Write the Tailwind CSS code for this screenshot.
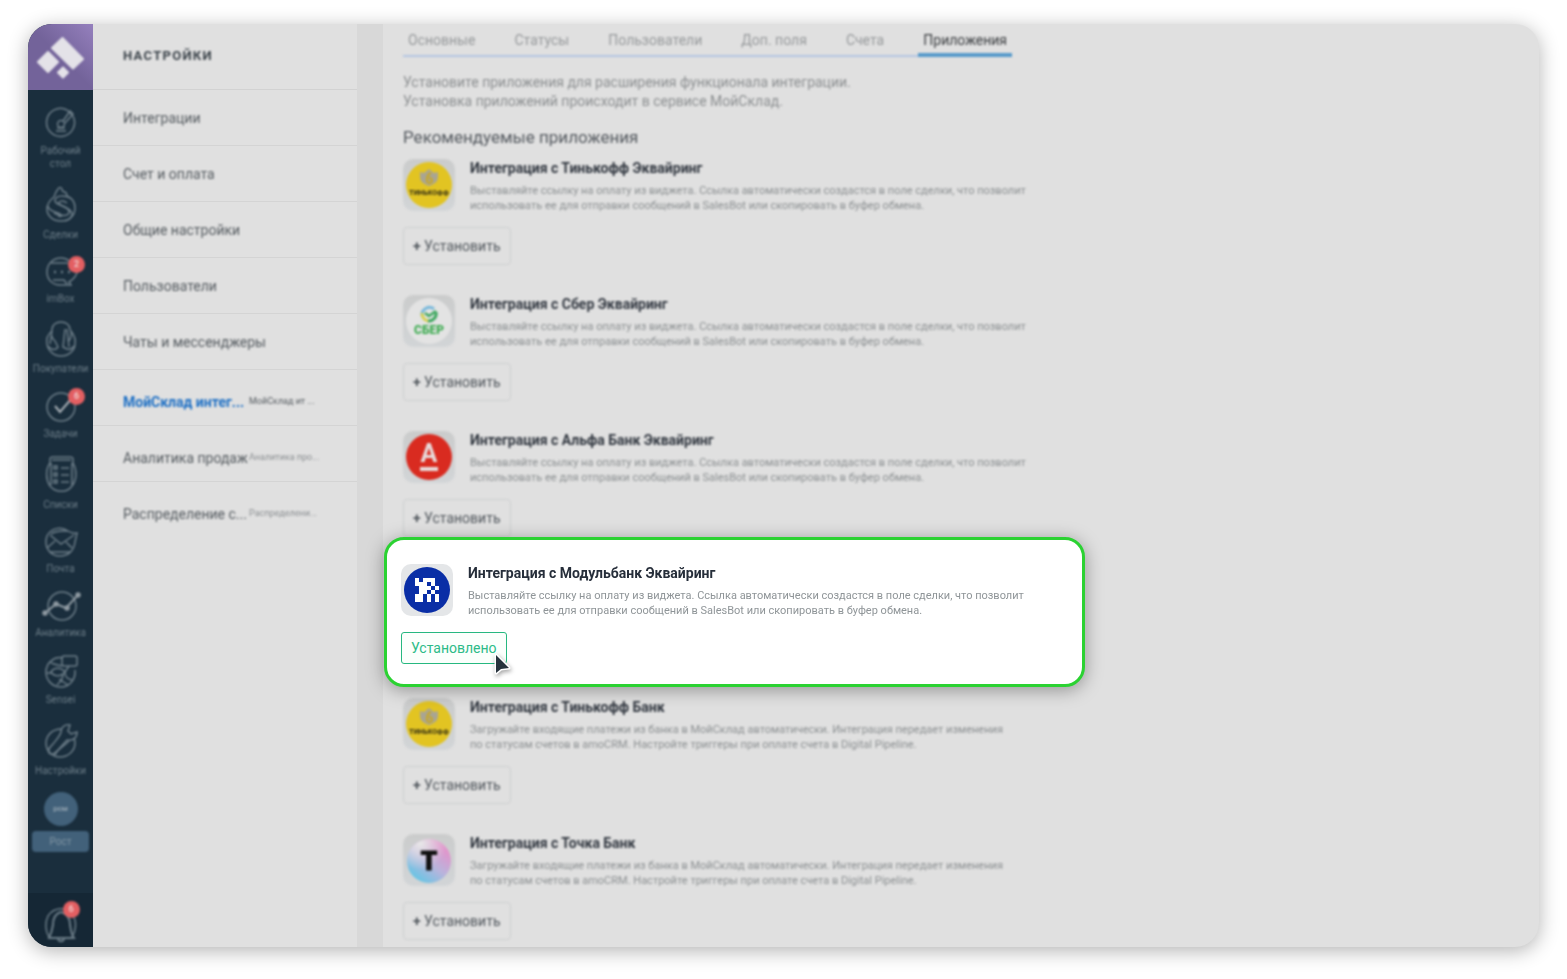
<!DOCTYPE html>
<html lang="ru">

<head>
  <meta charset="UTF-8" />
  <meta name="viewport" content="width=device-width, initial-scale=1" />
  <title>Настройки — Приложения</title>
  <script src="https://cdn.jsdelivr.net/npm/@tailwindcss/browser@4"></script>
</head>

<body class="h-screen bg-white px-7 pt-6 pb-8 font-['Roboto','Noto_Sans',sans-serif] text-[#3a4249]">

  <!-- Общие логотипы -->
  <svg class="absolute h-0 w-0" aria-hidden="true">
    <defs>
      <linearGradient id="tile" x1="0" y1="0" x2="0" y2="1">
        <stop offset="0" stop-color="#cbcccc" />
        <stop offset="1" stop-color="#d2d5d7" />
      </linearGradient>
      <linearGradient id="tochka" x1="0.25" y1="0.9" x2="0.8" y2="0.2">
        <stop offset="0" stop-color="#6ec4e4" />
        <stop offset="0.5" stop-color="#b9b4dc" />
        <stop offset="1" stop-color="#e096cc" />
      </linearGradient>
      <radialGradient id="tochkaLight" cx="0.3" cy="0.1" r="0.6">
        <stop offset="0" stop-color="#e8e8e8" />
        <stop offset="1" stop-color="#e8e8e8" stop-opacity="0" />
      </radialGradient>
    </defs>
    <symbol id="tinkoff" viewBox="0 0 52 52">
      <rect width="52" height="52" rx="10" fill="url(#tile)" />
      <circle cx="26" cy="26" r="23" fill="#e2c422" />
      <path d="M17 13l4 1 5-4 5 4 4-1v5c0 5-4 7-9 9-5-2-9-4-9-9z" fill="#a9a592" />
      <path d="M28 14c-3 1-4 4-4 7a2.500 2.500 0 1 0 2-2" fill="none" stroke="#c9a822" stroke-width="2" />
      <text x="26" y="36" text-anchor="middle" font-size="7" font-weight="800" fill="#3c3616">ТИНЬКОФФ</text>
    </symbol>
  </svg>

  <div class="flex h-full overflow-hidden rounded-3xl bg-[#e0e0e0] shadow-[0_4px_20px_rgba(0,0,0,0.3)]">

    <!-- Главное меню -->
    <nav class="flex w-[65px] shrink-0 flex-col bg-[#1a2e3d] text-[#6c7d88]">
      <a href="#" aria-label="Главная" class="block h-[66px] shrink-0 bg-linear-to-tr from-[#73639a] from-50% to-[#9580bd]">
        <svg viewBox="0 0 65 66" class="h-full w-full blur-[1px]" fill="#e4e2e8" stroke="#e4e2e8" stroke-width="2" stroke-linejoin="round">
          <path d="M34.500 14L55 35 45 44.500 24 24z" />
          <path d="M20 28l10 10-10 10-10-10z" />
          <path d="M35 43.500l5 5-5 5-5-5z" />
        </svg>
      </a>

      <ul class="flex flex-col gap-4 pt-[17px] text-center text-[10px] leading-[13px] blur-[1px]">
        <li>
          <a href="#" class="flex flex-col items-center gap-[5px]">
            <svg class="h-8 w-9" viewBox="0 0 36 32" fill="none" stroke="currentColor" stroke-width="1.500">
              <path d="M24 3a14 14 0 1 0 6 6" />
              <circle cx="18" cy="17" r="3.500" />
              <path d="M20 14l7-10 3 3-8 9M24 3l6 6M13 24h10M14 21h8" />
            </svg>
            <span>Рабочий<br />стол</span>
          </a>
        </li>
        <li>
          <a href="#" class="flex flex-col items-center gap-[5px]">
            <svg class="h-[37px] w-9" viewBox="0 0 36 37" fill="none" stroke="currentColor" stroke-width="1.500">
              <path d="M11 11l2-5c1-2 2-2 2-3 1-2 3-2 4 0 0 2 1 3 3 3 2 1 2 2 2 4 5 2 8 6 8 12 0 8-6 13-14 13S4 30 4 23c0-6 3-9 7-12" />
              <path d="M29 13c-6-4-16-4-17 1-1 6 14 5 14 12 0 4-8 5-15 1" />
              <path d="M24 17c-4-3-8-2-8 0 1 4 14 5 13 12-1 3-3 5-7 6M5 20c0 5 8 6 12 8 3 2 1 3-2 2" />
            </svg>
            <span>Сделки</span>
          </a>
        </li>
        <li>
          <a href="#" class="relative flex flex-col items-center gap-[5px]">
            <svg class="h-[30px] w-9" viewBox="0 0 36 30" fill="none" stroke="currentColor" stroke-width="1.500">
              <path d="M26 4C24 2 21 1 18 1 10 1 4 7 4 15s6 13 13 13h11l-2-3c5-3 8-6 8-11" />
              <path d="M8 6h17M10 23h11l3 4" />
              <path d="M11 15h2M18 15h2M25 15h2" stroke-width="2.500" />
            </svg>
            <span>imBox</span>
            <b class="absolute -top-px right-2 h-[17px] w-[17px] rounded-full bg-[#e35f62] text-[9px] leading-[17px] text-[#f0c4c4]">2</b>
          </a>
        </li>
        <li>
          <a href="#" class="flex flex-col items-center gap-[5px]">
            <svg class="h-9 w-9" viewBox="0 0 36 36" fill="none" stroke="currentColor" stroke-width="1.500">
              <path d="M9 10C4 14 3 18 4 23c1 7 7 12 14 12s14-5 14-12c1-5-1-9-4-13" />
              <path d="M12 20c-4-3-4-8-3-12 1-5 5-7 9-7s8 2 9 7c2 4 1 9-1 12M12 20l3 6-2 2c-3 1-6 0-8-3M22 8l-2 18 4 2c3 1 5 0 7-3M24 8l2 18M9 10l-2 13" />
            </svg>
            <span>Покупатели</span>
          </a>
        </li>
        <li>
          <a href="#" class="relative flex flex-col items-center gap-[5px]">
            <svg class="h-[31px] w-9" viewBox="0 0 36 31" fill="none" stroke="currentColor" stroke-width="1.500">
              <circle cx="18" cy="16" r="14" />
              <path d="M12 15l5 6L29 7" stroke="#a9b1b7" stroke-width="2" />
            </svg>
            <span>Задачи</span>
            <b class="absolute -top-[3px] right-2 h-[17px] w-[17px] rounded-full bg-[#e35f62] text-[9px] leading-[17px] text-[#f0c4c4]">6</b>
          </a>
        </li>
        <li>
          <a href="#" class="flex flex-col items-center gap-[5px]">
            <svg class="h-[37px] w-9" viewBox="0 0 36 37" fill="none" stroke="currentColor" stroke-width="1.500">
              <path d="M7 7V3c0-2 1-2 3-2h17c2 0 3 0 3 2v4M7 7c-5 7-4 17 0 23 6 7 17 7 22 0 5-6 5-16 1-23M8 7v22M29 7v22M9 4h19" />
              <path d="M11 10h3v3h-3zM18 12h8M11 17h3v3h-3zM18 19h8M11 24h3v3h-3zM18 26h8" />
            </svg>
            <span>Списки</span>
          </a>
        </li>
        <li>
          <a href="#" class="flex flex-col items-center gap-[5px]">
            <svg class="h-[30px] w-9" viewBox="0 0 36 30" fill="none" stroke="currentColor" stroke-width="1.500">
              <path d="M25 4C18-1 8 1 4 9c-4 12 4 20 13 20 8 0 14-5 15-14l2-9c-4 1-6 0-9-2z" />
              <path d="M7 8l11 9 13-9M4 21l8-7M29 21l-6-6M7 25h20M8 7c5-4 13-3 17-3" />
            </svg>
            <span>Почта</span>
          </a>
        </li>
        <li>
          <a href="#" class="flex flex-col items-center gap-[5px]">
            <svg class="h-[30px] w-10" viewBox="0 0 40 30" fill="none" stroke="currentColor" stroke-width="1.500">
              <circle cx="21" cy="15" r="14" />
              <g stroke="#8f9aa2" fill="#8f9aa2">
                <path d="M4 22L15 13l10 4L37 4" fill="none" stroke-width="2" />
                <circle cx="4" cy="22" r="2" />
                <circle cx="15" cy="13" r="2" />
                <circle cx="26" cy="17" r="2" />
                <circle cx="37" cy="4" r="2" />
              </g>
            </svg>
            <span>Аналитика</span>
          </a>
        </li>
        <li>
          <a href="#" class="flex flex-col items-center gap-[5px]">
            <svg class="h-[33px] w-9" viewBox="0 0 36 33" fill="none" stroke="currentColor" stroke-width="1.500">
              <path d="M20 3C11 1 3 8 3 17s7 15 15 15 15-7 14-17" />
              <rect x="19" y="1" width="15" height="10" rx="2" />
              <path d="M8 17c3-5 10-5 14 0-4 5-11 5-14 0zM19 11c-5-1-10-2-12-4M22 17l4-6M22 17c0 5 2 7 7 8M20 19c0 5-2 7-6 11M16 24l9 6M4 18h4" />
            </svg>
            <span>Sensei</span>
          </a>
        </li>
        <li>
          <a href="#" class="flex flex-col items-center gap-[5px]">
            <svg class="h-[37px] w-9" viewBox="0 0 36 37" fill="none" stroke="currentColor" stroke-width="1.500">
              <path d="M27 3c-5-1-9 2-9 7-1 4-4 7-8 12-3 3-6 6-4 9 3 3 6 0 9-3l9-10c6 1 10-2 10-8l-6 2-3-3z" />
              <path d="M18 7C9 7 3 14 3 21c0 8 6 14 14 14s15-6 15-14c0-2 0-3-1-5M12 33c2-6 8-8 14-14" />
            </svg>
            <span>Настройки</span>
          </a>
        </li>
      </ul>

      <div class="flex flex-col gap-[5px] px-1 pt-[15px] text-center text-[10px] blur-[1px]">
        <a href="#" class="mx-auto h-[34px] w-[34px] rounded-full bg-[#42617a] text-[8px] leading-[34px] font-bold text-[#91a2af]">рсм</a>
        <button class="h-[21px] rounded bg-[#42617a] text-[#8296a4]">Рост</button>
      </div>

      <a href="#" aria-label="Уведомления" class="mt-auto flex h-[54px] shrink-0 justify-center bg-[#152735] pt-3">
        <span class="relative blur-[1px]">
          <svg class="h-10 w-9" viewBox="0 0 36 40" fill="none" stroke="currentColor" stroke-width="1.500">
            <path d="M6 32C2 26 2 17 5 11 11 2 24 1 30 10c4 7 3 16-1 22" />
            <path d="M18 7c-7 2-8 8-8 13-1 6-2 9-4 13h25c-3-4-3-8-4-13 0-6-2-11-9-13zM15 34c1 3 5 3 6 0" stroke-width="2" />
          </svg>
          <b class="absolute -top-1 -right-px h-[17px] w-[17px] rounded-full bg-[#e35f62] text-center text-[9px] leading-[17px] text-[#f0c4c4]">6</b>
        </span>
      </a>
    </nav>

    <!-- Разделы настроек -->
    <aside class="w-[264px] shrink-0 text-sm text-[#555b60]">
      <h2 class="flex h-[66px] items-center border-b border-[#d2d2d2] pl-[30px] text-[13px] font-bold tracking-widest text-[#3a4249]">
        <span class="blur-[1px]">НАСТРОЙКИ</span>
      </h2>
      <ul class="divide-y divide-[#d4d4d4]">
        <li><a href="#" class="flex h-[55px] items-center pl-[30px]"><span class="blur-[1px]">Интеграции</span></a></li>
        <li><a href="#" class="flex h-[55px] items-center pl-[30px]"><span class="blur-[1px]">Счет и оплата</span></a></li>
        <li><a href="#" class="flex h-[55px] items-center pl-[30px]"><span class="blur-[1px]">Общие настройки</span></a></li>
        <li><a href="#" class="flex h-[55px] items-center pl-[30px]"><span class="blur-[1px]">Пользователи</span></a></li>
        <li><a href="#" class="flex h-[55px] items-center pl-[30px]"><span class="blur-[1px]">Чаты и мессенджеры</span></a></li>
        <li>
          <a href="#" class="flex h-[55px] items-center pt-2 pl-[30px] blur-[1px]">
            <span class="w-[126px] font-bold whitespace-nowrap text-[#1d6fc4]">МойСклад интег...</span>
            <small class="text-[9px]">МойСклад ит ...</small>
          </a>
        </li>
        <li>
          <a href="#" class="flex h-[55px] items-center pt-2 pl-[30px] blur-[1px]">
            <span class="w-[126px] whitespace-nowrap">Аналитика продаж</span>
            <small class="text-[9px] text-[#8a8e91]">Аналитика про...</small>
          </a>
        </li>
        <li>
          <a href="#" class="flex h-[55px] items-center pt-2 pl-[30px] blur-[1px]">
            <span class="w-[126px] whitespace-nowrap">Распределение с...</span>
            <small class="text-[9px] text-[#8a8e91]">Распределени...</small>
          </a>
        </li>
      </ul>
    </aside>

    <div class="w-[26px] shrink-0 bg-[#d8d8d8]"></div>

    <!-- Приложения -->
    <main class="min-w-0 flex-1 pl-5">
      <nav class="flex w-[609px] justify-between border-b-2 border-[#b4c6e2] text-sm text-[#96999b] blur-[1px]">
        <a href="#" class="h-[31px] px-[5px] pt-1.5">Основные</a>
        <a href="#" class="h-[31px] px-[5px] pt-1.5">Статусы</a>
        <a href="#" class="h-[31px] px-[5px] pt-1.5">Пользователи</a>
        <a href="#" class="h-[31px] px-[5px] pt-1.5">Доп. поля</a>
        <a href="#" class="h-[31px] px-[5px] pt-1.5">Счета</a>
        <a href="#" class="-mb-0.5 border-b-4 border-[#579aca] px-[5px] pt-1.5 text-[#3a3d40]">Приложения</a>
      </nav>

      <p class="pt-4 text-sm leading-[19px] text-[#8c8f91] blur-[1px]">
        Установите приложения для расширения функционала интеграции.<br />
        Установка приложений происходит в сервисе МойСклад.
      </p>
      <h1 class="pt-[14px] pb-[10px] text-[17px] leading-6 text-[#53585e] blur-[1px]">Рекомендуемые приложения</h1>

      <section class="mb-[30px] blur-[1px]">
        <div class="flex gap-[15px]">
          <svg class="h-[52px] w-[52px] shrink-0"><use href="#tinkoff" /></svg>
          <div>
            <h3 class="text-sm leading-[18px] font-bold text-[#30363f]">Интеграция с Тинькофф Эквайринг</h3>
            <p class="max-w-[570px] pt-[6px] text-[11px] leading-[15px] text-[#8c9092]">Выставляйте ссылку на оплату из виджета. Ссылка автоматически создастся в поле сделки, что позволит<br />использовать ее для отправки сообщений в SalesBot или скопировать в буфер обмена.</p>
          </div>
        </div>
        <button class="mt-[14px] h-[38px] rounded-sm border border-[#cdcfd0] px-[9px] text-sm text-[#50565c]"><b>+</b> Установить</button>
      </section>

      <section class="mb-[30px] blur-[1px]">
        <div class="flex gap-[15px]">
          <svg class="h-[52px] w-[52px] shrink-0" viewBox="0 0 52 52">
            <rect width="52" height="52" rx="10" fill="url(#tile)" />
            <circle cx="26" cy="26" r="23" fill="#e3e3e3" />
            <g fill="none" stroke-width="3">
              <path d="M19 21a7.500 7.500 0 0 1 12-7" stroke="#7ab9dc" />
              <path d="M19 18a7.500 7.500 0 0 0 6 8" stroke="#d6d155" />
              <path d="M25 26a7.500 7.500 0 0 0 8-9" stroke="#3fa860" />
              <path d="M22 18l4 3 7-5" stroke="#3fa860" stroke-width="2.500" />
            </g>
            <text x="26" y="39" text-anchor="middle" font-size="12" font-weight="800" fill="#36a94a">СБЕР</text>
          </svg>
          <div>
            <h3 class="text-sm leading-[18px] font-bold text-[#30363f]">Интеграция с Сбер Эквайринг</h3>
            <p class="max-w-[570px] pt-[6px] text-[11px] leading-[15px] text-[#8c9092]">Выставляйте ссылку на оплату из виджета. Ссылка автоматически создастся в поле сделки, что позволит<br />использовать ее для отправки сообщений в SalesBot или скопировать в буфер обмена.</p>
          </div>
        </div>
        <button class="mt-[14px] h-[38px] rounded-sm border border-[#cdcfd0] px-[9px] text-sm text-[#50565c]"><b>+</b> Установить</button>
      </section>

      <section class="blur-[1px]">
        <div class="flex gap-[15px]">
          <svg class="h-[52px] w-[52px] shrink-0" viewBox="0 0 52 52">
            <rect width="52" height="52" rx="10" fill="url(#tile)" />
            <circle cx="26" cy="26" r="23" fill="#d92b20" />
            <text x="26" y="31" text-anchor="middle" font-size="25" font-weight="700" fill="#e8dcdc">А</text>
            <path d="M17 38h18" stroke="#e8dcdc" stroke-width="4" />
          </svg>
          <div>
            <h3 class="text-sm leading-[18px] font-bold text-[#30363f]">Интеграция с Альфа Банк Эквайринг</h3>
            <p class="max-w-[570px] pt-[6px] text-[11px] leading-[15px] text-[#8c9092]">Выставляйте ссылку на оплату из виджета. Ссылка автоматически создастся в поле сделки, что позволит<br />использовать ее для отправки сообщений в SalesBot или скопировать в буфер обмена.</p>
          </div>
        </div>
        <button class="mt-[14px] h-[38px] rounded-sm border border-[#cdcfd0] px-[9px] text-sm text-[#50565c]"><b>+</b> Установить</button>
      </section>

      <!-- Выделенная карточка -->
      <section class="relative z-10 -ml-[19px] max-w-[701px] rounded-[20px] border-3 border-[#2bd232] bg-white px-[14px] pt-6 pb-5 shadow-[0_3px_18px_rgba(0,0,0,0.35)]">
        <div class="flex gap-[15px]">
          <svg class="h-[52px] w-[52px] shrink-0" viewBox="0 0 52 52">
            <rect width="52" height="52" rx="10" fill="#e4e6e8" />
            <circle cx="26" cy="26" r="23" fill="#0a2ea6" />
            <g fill="#fff" shape-rendering="crispEdges">
              <path d="M14 14h4v4h-4zM22 14h12v4H22z" />
              <path d="M14 18h12v4H14zM30 18h4v4h-4z" />
              <path d="M18 22h12v4H18zM34 22h4v4h-4z" />
              <path d="M18 26h8v4h-8zM30 26h4v4h-4z" />
              <path d="M14 30h8v4h-8zM26 30h4v4h-4zM34 30h4v4h-4z" />
              <path d="M14 34h8v4h-8zM26 34h4v4h-4zM34 34h4v4h-4z" />
            </g>
          </svg>
          <div>
            <h3 class="text-sm leading-[18px] font-bold text-[#262e3a]">Интеграция с Модульбанк Эквайринг</h3>
            <p class="max-w-[570px] pt-[6px] text-[11px] leading-[15px] text-[#8f9598]">Выставляйте ссылку на оплату из виджета. Ссылка автоматически создастся в поле сделки, что позволит<br />использовать ее для отправки сообщений в SalesBot или скопировать в буфер обмена.</p>
          </div>
        </div>
        <div class="relative mt-[14px] w-fit">
          <button class="block h-8 rounded-[3px] border border-[#26b880] bg-[#fbfffc] px-[9px] text-sm text-[#2cbb88]">Установлено</button>
          <svg class="absolute -right-1.5 -bottom-3.5 h-[26px] w-[20px] drop-shadow-[1px_2px_2px_rgba(0,0,0,0.35)]" viewBox="0 0 20 26">
            <path d="M3 3v18l5-4 8-1z" fill="#26323c" stroke="#fff" stroke-width="3" stroke-linejoin="round" paint-order="stroke" />
          </svg>
        </div>
      </section>

      <section class="mt-[11px] mb-[30px] blur-[1px]">
        <div class="flex gap-[15px]">
          <svg class="h-[52px] w-[52px] shrink-0"><use href="#tinkoff" /></svg>
          <div>
            <h3 class="text-sm leading-[18px] font-bold text-[#30363f]">Интеграция с Тинькофф Банк</h3>
            <p class="max-w-[570px] pt-[6px] text-[11px] leading-[15px] text-[#8c9092]">Загружайте входящие платежи из банка в МойСклад автоматически. Интеграция передает изменения<br />по статусам счетов в amoCRM. Настройте триггеры при оплате счета в Digital Pipeline.</p>
          </div>
        </div>
        <button class="mt-[14px] h-[38px] rounded-sm border border-[#cdcfd0] px-[9px] text-sm text-[#50565c]"><b>+</b> Установить</button>
      </section>

      <section class="blur-[1px]">
        <div class="flex gap-[15px]">
          <svg class="h-[52px] w-[52px] shrink-0" viewBox="0 0 52 52">
            <rect width="52" height="52" rx="10" fill="url(#tile)" />
            <circle cx="26" cy="27" r="22" fill="url(#tochka)" />
            <circle cx="26" cy="27" r="22" fill="url(#tochkaLight)" />
            <text x="26" y="36" text-anchor="middle" font-size="26" font-weight="900" fill="#111" stroke="#111">Т</text>
          </svg>
          <div>
            <h3 class="text-sm leading-[18px] font-bold text-[#30363f]">Интеграция с Точка Банк</h3>
            <p class="max-w-[570px] pt-[6px] text-[11px] leading-[15px] text-[#8c9092]">Загружайте входящие платежи из банка в МойСклад автоматически. Интеграция передает изменения<br />по статусам счетов в amoCRM. Настройте триггеры при оплате счета в Digital Pipeline.</p>
          </div>
        </div>
        <button class="mt-[14px] h-[38px] rounded-sm border border-[#cdcfd0] px-[9px] text-sm text-[#50565c]"><b>+</b> Установить</button>
      </section>
    </main>
  </div>
</body>

</html>
